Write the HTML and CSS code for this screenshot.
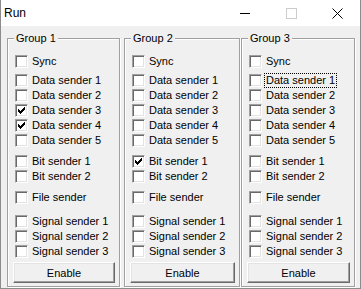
FILE: index.html
```html
<!DOCTYPE html>
<html>
<head>
<meta charset="utf-8">
<title>Run</title>
<link rel="stylesheet" href="styles.css">
</head>
<body>
<div class="window">
  <div class="titlebar">
    <span class="title">Run</span>
    <div class="controls">
      <span class="ctl"><svg width="10" height="10" viewBox="0 0 10 10"><rect x="0" y="5" width="10" height="1" fill="#000"/></svg></span>
      <span class="ctl"><svg width="11" height="11" viewBox="0 0 11 11"><rect x="0.5" y="0.5" width="10" height="10" fill="none" stroke="#cccccc" stroke-width="1"/></svg></span>
      <span class="ctl"><svg width="11" height="11" viewBox="0 0 11 11"><path d="M0.5 0.5L10.5 10.5M10.5 0.5L0.5 10.5" stroke="#000" stroke-width="1" fill="none"/></svg></span>
    </div>
  </div>
  <div class="client">
    <fieldset class="group g1">
      <legend>Group 1</legend>
      <div class="row"><span class="cb"></span><span class="lbl">Sync</span></div>
      <div class="sec s-data">
        <div class="row"><span class="cb"></span><span class="lbl">Data sender 1</span></div>
        <div class="row"><span class="cb"></span><span class="lbl">Data sender 2</span></div>
        <div class="row"><span class="cb"><svg class="chk" width="7" height="7" viewBox="0 0 7 7"><path d="M6 0h1v1h-1zM5 1h2v1h-2zM0 2h1v1h-1zM4 2h3v1h-3zM0 3h2v1h-2zM3 3h3v1h-3zM0 4h5v1h-5zM1 5h3v1h-3zM2 6h1v1h-1z"/></svg></span><span class="lbl">Data sender 3</span></div>
        <div class="row"><span class="cb"><svg class="chk" width="7" height="7" viewBox="0 0 7 7"><path d="M6 0h1v1h-1zM5 1h2v1h-2zM0 2h1v1h-1zM4 2h3v1h-3zM0 3h2v1h-2zM3 3h3v1h-3zM0 4h5v1h-5zM1 5h3v1h-3zM2 6h1v1h-1z"/></svg></span><span class="lbl">Data sender 4</span></div>
        <div class="row"><span class="cb"></span><span class="lbl">Data sender 5</span></div>
      </div>
      <div class="sec s-bit">
        <div class="row"><span class="cb"></span><span class="lbl">Bit sender 1</span></div>
        <div class="row"><span class="cb"></span><span class="lbl">Bit sender 2</span></div>
      </div>
      <div class="sec s-file">
        <div class="row"><span class="cb"></span><span class="lbl">File sender</span></div>
      </div>
      <div class="sec s-signal">
        <div class="row"><span class="cb"></span><span class="lbl">Signal sender 1</span></div>
        <div class="row"><span class="cb"></span><span class="lbl">Signal sender 2</span></div>
        <div class="row"><span class="cb"></span><span class="lbl">Signal sender 3</span></div>
      </div>
      <button class="btn">Enable</button>
    </fieldset>

    <fieldset class="group g2">
      <legend>Group 2</legend>
      <div class="row"><span class="cb"></span><span class="lbl">Sync</span></div>
      <div class="sec s-data">
        <div class="row"><span class="cb"></span><span class="lbl">Data sender 1</span></div>
        <div class="row"><span class="cb"></span><span class="lbl">Data sender 2</span></div>
        <div class="row"><span class="cb"></span><span class="lbl">Data sender 3</span></div>
        <div class="row"><span class="cb"></span><span class="lbl">Data sender 4</span></div>
        <div class="row"><span class="cb"></span><span class="lbl">Data sender 5</span></div>
      </div>
      <div class="sec s-bit">
        <div class="row"><span class="cb"><svg class="chk" width="7" height="7" viewBox="0 0 7 7"><path d="M6 0h1v1h-1zM5 1h2v1h-2zM0 2h1v1h-1zM4 2h3v1h-3zM0 3h2v1h-2zM3 3h3v1h-3zM0 4h5v1h-5zM1 5h3v1h-3zM2 6h1v1h-1z"/></svg></span><span class="lbl">Bit sender 1</span></div>
        <div class="row"><span class="cb"></span><span class="lbl">Bit sender 2</span></div>
      </div>
      <div class="sec s-file">
        <div class="row"><span class="cb"></span><span class="lbl">File sender</span></div>
      </div>
      <div class="sec s-signal">
        <div class="row"><span class="cb"></span><span class="lbl">Signal sender 1</span></div>
        <div class="row"><span class="cb"></span><span class="lbl">Signal sender 2</span></div>
        <div class="row"><span class="cb"></span><span class="lbl">Signal sender 3</span></div>
      </div>
      <button class="btn">Enable</button>
    </fieldset>

    <fieldset class="group g3">
      <legend>Group 3</legend>
      <div class="row"><span class="cb"></span><span class="lbl">Sync</span></div>
      <div class="sec s-data">
        <div class="row"><span class="cb"></span><span class="lbl"><span class="focus">Data sender 1</span></span></div>
        <div class="row"><span class="cb"></span><span class="lbl">Data sender 2</span></div>
        <div class="row"><span class="cb"></span><span class="lbl">Data sender 3</span></div>
        <div class="row"><span class="cb"></span><span class="lbl">Data sender 4</span></div>
        <div class="row"><span class="cb"></span><span class="lbl">Data sender 5</span></div>
      </div>
      <div class="sec s-bit">
        <div class="row"><span class="cb"></span><span class="lbl">Bit sender 1</span></div>
        <div class="row"><span class="cb"></span><span class="lbl">Bit sender 2</span></div>
      </div>
      <div class="sec s-file">
        <div class="row"><span class="cb"></span><span class="lbl">File sender</span></div>
      </div>
      <div class="sec s-signal">
        <div class="row"><span class="cb"></span><span class="lbl">Signal sender 1</span></div>
        <div class="row"><span class="cb"></span><span class="lbl">Signal sender 2</span></div>
        <div class="row"><span class="cb"></span><span class="lbl">Signal sender 3</span></div>
      </div>
      <button class="btn">Enable</button>
    </fieldset>
  </div>
</div>
</body>
</html>
```

FILE: styles.css
```css
* { box-sizing: border-box; }

html, body {
  margin: 0;
  padding: 0;
  width: 361px;
  height: 289px;
  overflow: hidden;
  background: #f0f0f0;
}

body {
  font-family: "Liberation Sans", Arial, sans-serif;
  font-size: 11px;
  color: #000;
}

.window {
  width: 361px;
  height: 289px;
  display: flex;
  flex-direction: column;
  border-left: 1px solid #8c8c8c;
  border-right: 1px solid #8c8c8c;
  border-bottom: 1px solid #8c8c8c;
  background: #f0f0f0;
}

.titlebar {
  height: 26px;
  flex: 0 0 26px;
  background: #fff;
  display: flex;
  align-items: center;
}

.title {
  font-size: 12px;
  padding-left: 3px;
  line-height: 26px;
}

.controls {
  margin-left: auto;
  display: flex;
  height: 26px;
}

.ctl {
  width: 46px;
  height: 26px;
  display: flex;
  align-items: center;
  justify-content: center;
}

.ctl svg { display: block; }

.client {
  flex: 1;
  display: flex;
  align-items: flex-start;
  padding: 6px 0 0 6px;
}

.group {
  margin: 0;
  min-inline-size: 0;
  padding: 9px 4px 3px 5px;
  border: 1px solid #a0a0a0;
  box-shadow: inset 1px 1px 0 #fff, 1px 1px 0 #fff;
  height: 255px;
  display: block;
}

.g1 { width: 113px; margin-right: 4px; }
.g2 { width: 116px; margin-right: 1px; }
.g3 { width: 114px; }

.group legend {
  margin-left: 1px;
  padding: 0 2px;
  line-height: 13px;
  height: 13px;
  background: #f0f0f0;
  font-size: 11px;
}

.row {
  display: flex;
  align-items: flex-start;
  height: 15px;
  padding-left: 2px;
}

.cb {
  flex: 0 0 13px;
  width: 13px;
  height: 13px;
  margin-top: 1px;
  background: #fff;
  border: 1px solid;
  border-color: #a0a0a0 #fff #fff #a0a0a0;
  box-shadow: inset 1px 1px 0 #696969, inset -1px -1px 0 #e3e3e3;
}

.chk {
  display: block;
  margin: 2px 0 0 2px;
  shape-rendering: crispEdges;
  fill: #000;
}

.lbl {
  margin-left: 4px;
  line-height: 15px;
  white-space: nowrap;
}

.focus {
  outline: 1px dotted #000;
  outline-offset: 0;
  padding: 0 1px;
  margin-left: -1px;
  display: inline-block;
  line-height: 13px;
  margin-top: 1px;
  vertical-align: top;
}

.s-data { margin-top: 4px; }
.s-bit { margin-top: 6px; }
.s-file { margin-top: 6px; }
.s-signal { margin-top: 9px; }

.btn {
  display: block;
  width: 100%;
  height: 21px;
  margin-top: 3px;
  padding: 0;
  font-family: "Liberation Sans", Arial, sans-serif;
  font-size: 11px;
  color: #000;
  background: #f0f0f0;
  border: 1px solid;
  border-color: #fff #696969 #696969 #fff;
  box-shadow: inset -1px -1px 0 #a0a0a0, inset 1px 1px 0 #e3e3e3;
  border-radius: 0;
}
```
